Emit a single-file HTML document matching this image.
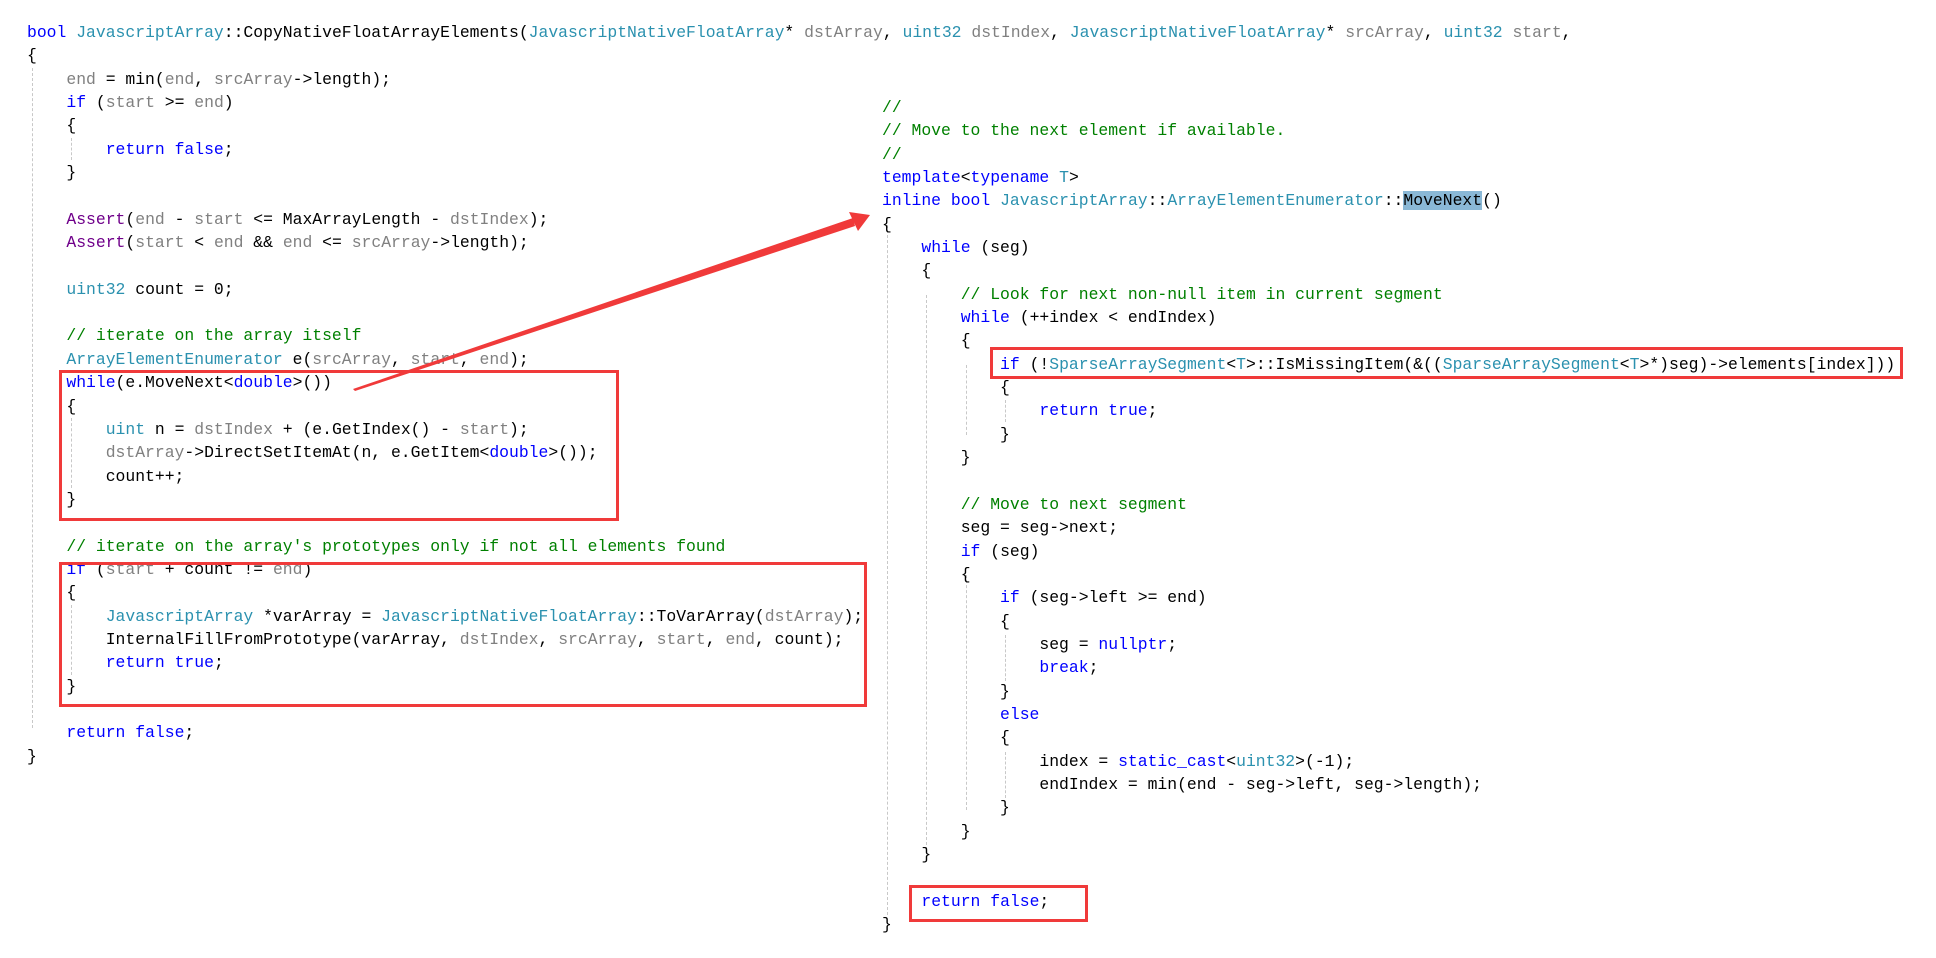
<!DOCTYPE html>
<html><head><meta charset="utf-8">
<style>
body{margin:0;width:1936px;height:958px;background:#fff;position:relative;overflow:hidden}
pre{position:absolute;margin:0;font-family:"Liberation Mono",monospace;font-size:16.4px;line-height:23.35px;color:#000;white-space:pre}
.k{color:#0000ff}.t{color:#2b91af}.p{color:#808080}.c{color:#008000}.m{color:#6f008a}
.g{position:absolute;width:0;border-left:1px dashed #c8c8c8}
.box{position:absolute;border:3px solid #f03a3a;box-sizing:border-box}
.hl{background:#8ab8d6}
</style></head><body>
<div class="g" style="left:32px;top:68px;height:660px"></div>
<div class="g" style="left:71px;top:138px;height:22px"></div>
<div class="g" style="left:71px;top:418px;height:70px"></div>
<div class="g" style="left:71px;top:605px;height:70px"></div>
<div class="g" style="left:887px;top:225px;height:690px"></div>
<div class="g" style="left:926px;top:295px;height:555px"></div>
<div class="g" style="left:966px;top:365px;height:70px"></div>
<div class="g" style="left:966px;top:575px;height:235px"></div>
<div class="g" style="left:1005px;top:400px;height:22px"></div>
<div class="g" style="left:1005px;top:635px;height:46px"></div>
<div class="g" style="left:1005px;top:752px;height:46px"></div>
<pre style="left:27px;top:21px"><span class="k">bool</span> <span class="t">JavascriptArray</span>::CopyNativeFloatArrayElements(<span class="t">JavascriptNativeFloatArray</span>* <span class="p">dstArray</span>, <span class="t">uint32</span> <span class="p">dstIndex</span>, <span class="t">JavascriptNativeFloatArray</span>* <span class="p">srcArray</span>, <span class="t">uint32</span> <span class="p">start</span>,
{
    <span class="p">end</span> = min(<span class="p">end</span>, <span class="p">srcArray</span>-&gt;length);
    <span class="k">if</span> (<span class="p">start</span> &gt;= <span class="p">end</span>)
    {
        <span class="k">return</span> <span class="k">false</span>;
    }

    <span class="m">Assert</span>(<span class="p">end</span> - <span class="p">start</span> &lt;= MaxArrayLength - <span class="p">dstIndex</span>);
    <span class="m">Assert</span>(<span class="p">start</span> &lt; <span class="p">end</span> &amp;&amp; <span class="p">end</span> &lt;= <span class="p">srcArray</span>-&gt;length);

    <span class="t">uint32</span> count = 0;

    <span class="c">// iterate on the array itself</span>
    <span class="t">ArrayElementEnumerator</span> e(<span class="p">srcArray</span>, <span class="p">start</span>, <span class="p">end</span>);
    <span class="k">while</span>(e.MoveNext&lt;<span class="k">double</span>&gt;())
    {
        <span class="t">uint</span> n = <span class="p">dstIndex</span> + (e.GetIndex() - <span class="p">start</span>);
        <span class="p">dstArray</span>-&gt;DirectSetItemAt(n, e.GetItem&lt;<span class="k">double</span>&gt;());
        count++;
    }

    <span class="c">// iterate on the array's prototypes only if not all elements found</span>
    <span class="k">if</span> (<span class="p">start</span> + count != <span class="p">end</span>)
    {
        <span class="t">JavascriptArray</span> *varArray = <span class="t">JavascriptNativeFloatArray</span>::ToVarArray(<span class="p">dstArray</span>);
        InternalFillFromPrototype(varArray, <span class="p">dstIndex</span>, <span class="p">srcArray</span>, <span class="p">start</span>, <span class="p">end</span>, count);
        <span class="k">return</span> <span class="k">true</span>;
    }

    <span class="k">return</span> <span class="k">false</span>;
}</pre>
<pre style="left:882px;top:96px"><span class="c">//
// Move to the next element if available.
//</span>
<span class="k">template</span>&lt;<span class="k">typename</span> <span class="t">T</span>&gt;
<span class="k">inline</span> <span class="k">bool</span> <span class="t">JavascriptArray</span>::<span class="t">ArrayElementEnumerator</span>::<span class="hl">MoveNext</span>()
{
    <span class="k">while</span> (seg)
    {
        <span class="c">// Look for next non-null item in current segment</span>
        <span class="k">while</span> (++index &lt; endIndex)
        {
            <span class="k">if</span> (!<span class="t">SparseArraySegment</span>&lt;<span class="t">T</span>&gt;::IsMissingItem(&amp;((<span class="t">SparseArraySegment</span>&lt;<span class="t">T</span>&gt;*)seg)-&gt;elements[index]))
            {
                <span class="k">return</span> <span class="k">true</span>;
            }
        }

        <span class="c">// Move to next segment</span>
        seg = seg-&gt;next;
        <span class="k">if</span> (seg)
        {
            <span class="k">if</span> (seg-&gt;left &gt;= end)
            {
                seg = <span class="k">nullptr</span>;
                <span class="k">break</span>;
            }
            <span class="k">else</span>
            {
                index = <span class="k">static_cast</span>&lt;<span class="t">uint32</span>&gt;(-1);
                endIndex = min(end - seg-&gt;left, seg-&gt;length);
            }
        }
    }

    <span class="k">return</span> <span class="k">false</span>;
}</pre>
<div class="box" style="left:59px;top:370px;width:560px;height:151px"></div>
<div class="box" style="left:59px;top:562px;width:808px;height:145px"></div>
<div class="box" style="left:990px;top:347px;width:913px;height:32px"></div>
<div class="box" style="left:909px;top:885px;width:179px;height:37px"></div>
<svg style="position:absolute;left:0;top:0" width="1936" height="958">
<polygon points="353,389 355,391 855,226 853,218" fill="#f03a3a"/>
<polygon points="849,212 870,215 858,231" fill="#f03a3a"/>
</svg>
</body></html>
